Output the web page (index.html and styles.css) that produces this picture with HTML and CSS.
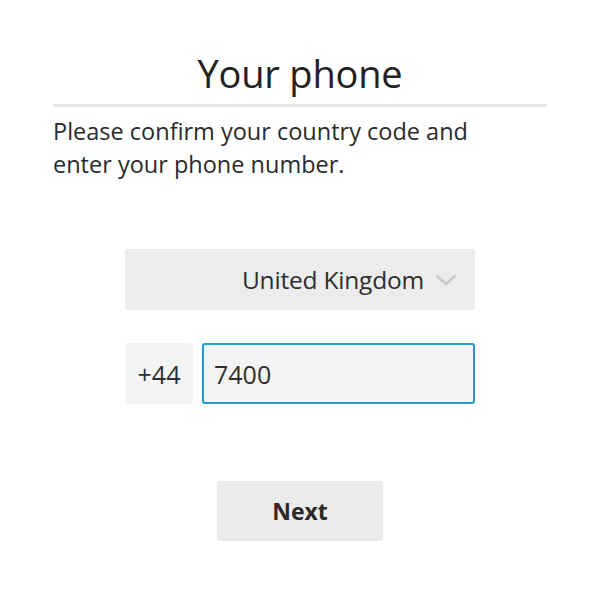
FILE: index.html
```
<!DOCTYPE html>
<html>
<head>
<meta charset="utf-8">
<link rel="stylesheet" href="styles.css">
</head>
<body>
<div class="page">
  <h1 class="title">Your phone</h1>
  <div class="divider"></div>
  <p class="intro">Please confirm your country code and<br>enter your phone number.</p>
  <div class="form">
    <div class="select">
      <span class="select-label">United Kingdom</span>
      <svg class="chevron" width="22" height="12" viewBox="0 0 22 12"><path d="M1.5 1.5 L11 10 L20.5 1.5" fill="none" stroke="#c9c9c9" stroke-width="2.6"/></svg>
    </div>
    <div class="phone-row">
      <div class="code">+44</div>
      <div class="number">7400</div>
    </div>
    <div class="next">Next</div>
  </div>
</div>
</body>
</html>
```
FILE: styles.css
```
html, body { margin: 0; padding: 0; background: #fff; }
body { font-family: "Open Sans", "Noto Sans", sans-serif; color: #262626; }
.page { width: 600px; height: 600px; padding: 0 53px; box-sizing: border-box; }
.title { margin: 0; padding-top: 47px; font-size: 38px; font-weight: 400; line-height: 52px; text-align: center; color: #222; letter-spacing: -0.2px; }
.divider { height: 3px; background: #e6e6e6; margin-top: 5px; }
.intro { margin: 8px 0 0; font-size: 23.5px; line-height: 33px; color: #2a2a2a; letter-spacing: 0; }
.form { display: flex; flex-direction: column; align-items: center; margin-top: 68px; }
.select { width: 350px; height: 61px; background: #ececec; border-radius: 3px; display: flex; align-items: center; justify-content: flex-end; padding-right: 18px; box-sizing: border-box; gap: 11px; }
.select-label { font-size: 24.5px; line-height: 30px; color: #2e2e2e; letter-spacing: -0.2px; }
.chevron { display: block; }
.phone-row { display: flex; gap: 9px; margin-top: 33px; width: 350px; }
.code { width: 68px; height: 61px; background: #f4f4f4; border-radius: 2px; display: flex; align-items: center; justify-content: center; font-size: 25px; color: #2e2e2e; }
.number { flex: 1; height: 61px; background: #f4f4f4; border: 2px solid #1f9ad2; border-radius: 3px; box-sizing: border-box; display: flex; align-items: center; padding-left: 10px; font-size: 25px; color: #2e2e2e; }
.next { width: 166px; height: 60px; background: #ebebeb; border-radius: 3px; margin-top: 77px; display: flex; align-items: center; justify-content: center; font-size: 23px; font-weight: 700; color: #2a2a2a; }
```
